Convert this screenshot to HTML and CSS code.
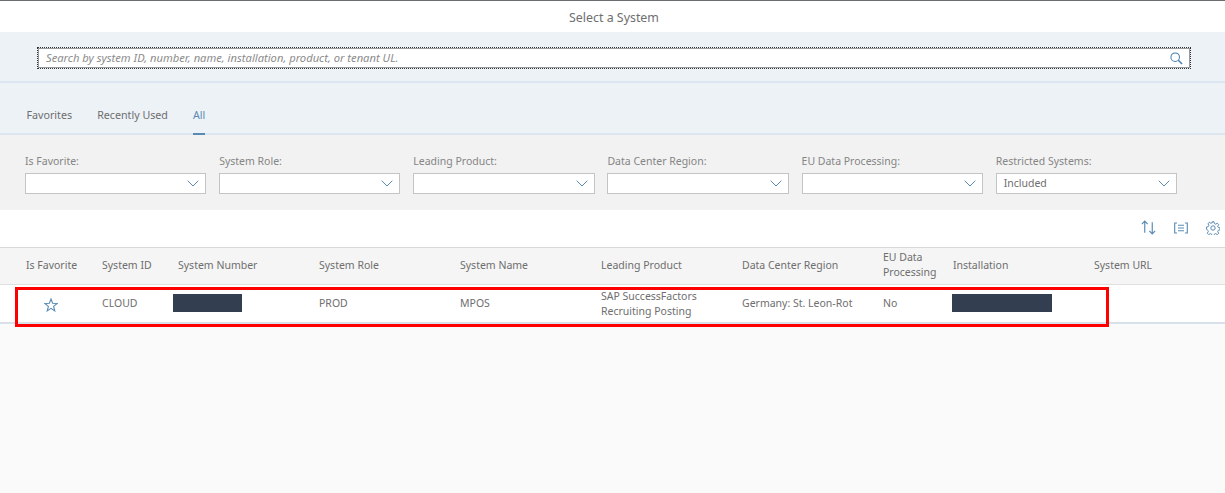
FILE: index.html
```html
<!DOCTYPE html>
<html lang="en">
<head>
<meta charset="utf-8">
<title>Select a System</title>
<link rel="stylesheet" href="styles.css">
</head>
<body>
<div class="page">
  <header class="title">Select a System</header>
  <section class="search-band">
    <div class="search">
      <span class="placeholder">Search by system ID, number, name, installation, product, or tenant UL.</span>
      <svg class="search-icon" viewBox="0 0 14 14" width="13" height="13"><circle cx="5.6" cy="5.6" r="4.6" fill="none" stroke="#427cac" stroke-width="1.1"/><path d="M9 9l4 4" stroke="#427cac" stroke-width="1.5" fill="none"/></svg>
    </div>
  </section>
  <nav class="tabs">
    <span class="tab">Favorites</span>
    <span class="tab">Recently Used</span>
    <span class="tab active">All</span>
  </nav>
  <section class="filters">
    <div class="filter"><label>Is Favorite:</label><div class="select"><span></span><svg viewBox="0 0 12 7" width="12" height="7"><path d="M.7.7L6 6l5.3-5.3" fill="none" stroke="#5a8ab3"/></svg></div></div>
    <div class="filter"><label>System Role:</label><div class="select"><span></span><svg viewBox="0 0 12 7" width="12" height="7"><path d="M.7.7L6 6l5.3-5.3" fill="none" stroke="#5a8ab3"/></svg></div></div>
    <div class="filter"><label>Leading Product:</label><div class="select"><span></span><svg viewBox="0 0 12 7" width="12" height="7"><path d="M.7.7L6 6l5.3-5.3" fill="none" stroke="#5a8ab3"/></svg></div></div>
    <div class="filter"><label>Data Center Region:</label><div class="select"><span></span><svg viewBox="0 0 12 7" width="12" height="7"><path d="M.7.7L6 6l5.3-5.3" fill="none" stroke="#5a8ab3"/></svg></div></div>
    <div class="filter"><label>EU Data Processing:</label><div class="select"><span></span><svg viewBox="0 0 12 7" width="12" height="7"><path d="M.7.7L6 6l5.3-5.3" fill="none" stroke="#5a8ab3"/></svg></div></div>
    <div class="filter"><label>Restricted Systems:</label><div class="select"><span>Included</span><svg viewBox="0 0 12 7" width="12" height="7"><path d="M.7.7L6 6l5.3-5.3" fill="none" stroke="#5a8ab3"/></svg></div></div>
  </section>
  <section class="toolbar">
    <svg viewBox="0 0 14 14" width="15" height="15"><path d="M3.5 12V1M.8 3.8L3.5 1l2.7 2.8M10.5 2v11M7.8 10.2l2.7 2.8 2.7-2.8" fill="none" stroke="#5a8ab3" stroke-width="1.1"/></svg>
    <svg viewBox="0 0 14 12" width="14" height="12"><path d="M3 1H.7v10H3M11 1h2.3v10H11M4 3.3h6M4 6h6M4 8.7h6" fill="none" stroke="#5a8ab3" stroke-width="1.1"/></svg>
    <svg viewBox="0 0 14 14" width="14" height="14"><path d="M6 .8h2l.4 1.8 1.3.6 1.6-1 1.4 1.4-1 1.6.6 1.3 1.8.4v2l-1.8.4-.6 1.3 1 1.6-1.4 1.4-1.6-1-1.3.6-.4 1.8H6l-.4-1.8-1.3-.6-1.6 1-1.4-1.4 1-1.6-.6-1.3L.5 8V6l1.8-.4.6-1.3-1-1.6 1.4-1.4 1.6 1 1.3-.6z" fill="none" stroke="#5a8ab3" stroke-width="1"/><circle cx="7" cy="7" r="2.2" fill="none" stroke="#5a8ab3"/></svg>
  </section>
  <section class="table">
    <div class="row head">
      <div>Is Favorite</div><div>System ID</div><div>System Number</div><div>System Role</div><div>System Name</div><div>Leading Product</div><div>Data Center Region</div><div>EU Data Processing</div><div>Installation</div><div>System URL</div>
    </div>
    <div class="row body-row">
      <div class="star"><svg viewBox="0 0 14 14" width="14" height="14"><path d="M7 1l1.6 4.3 4.6.2-3.6 2.9 1.2 4.5L7 10.4l-3.8 2.5 1.2-4.5L.8 5.5l4.6-.2z" fill="none" stroke="#5a8ab3" stroke-width="1.1"/></svg></div>
      <div>CLOUD</div>
      <div><span class="redact number"></span></div>
      <div>PROD</div>
      <div>MPOS</div>
      <div>SAP SuccessFactors Recruiting Posting</div>
      <div>Germany: St. Leon-Rot</div>
      <div>No</div>
      <div><span class="redact install"></span></div>
      <div></div>
    </div>
  </section>
  <div class="empty"></div>
  <div class="highlight"></div>
</div>
</body>
</html>
```

FILE: styles.css
```css
* { box-sizing: border-box; }
html, body { margin: 0; padding: 0; }
body { background: #fafafa; overflow: hidden; }
.page {
  position: relative;
  width: 1225px;
  height: 493px;
  overflow: hidden;
  display: flex;
  flex-direction: column;
  font-family: "Noto Sans", "Liberation Sans", sans-serif;
  font-size: 10.5px;
  color: #6e6e6e;
}
.title {
  height: 32px;
  flex: none;
  padding-left: 3px;
  background: #fff;
  border-top: 1px solid #6a6d70;
  text-align: center;
  font-size: 12.4px;
  line-height: 33px;
  color: #6e6e6e;
}
.search-band {
  height: 51px;
  flex: none;
  padding: 16px 35px 0 38px;
  background: #edf2f7;
  border-bottom: 2px solid #dbe6f0;
}
.search {
  height: 20px;
  display: flex;
  align-items: center;
  justify-content: space-between;
  padding: 0 6px 0 7px;
  background: #fff;
  outline: 1px dotted #333;
  border: 1px solid #999;
}
.placeholder { margin-bottom: 2px; font-style: italic; font-size: 11.2px; color: #8c8c8c; }
.search-icon { flex: none; }
.tabs {
  height: 52px;
  flex: none;
  display: flex;
  gap: 25px;
  padding-left: 26.5px;
  font-size: 10.7px;
  background: #edf2f7;
  border-bottom: 2px solid #dbe6f0;
}
.tab {
  position: relative;
  padding-top: 25px;
  line-height: 15px;
}
.tab.active { color: #5a8ab3; }
.tab.active::after {
  content: "";
  position: absolute;
  left: 0;
  right: 0;
  bottom: -2px;
  height: 2px;
  background: #5a8ab3;
}
.filters {
  height: 75px;
  flex: none;
  display: grid;
  grid-template-columns: repeat(6, 181.3px);
  column-gap: 12.85px;
  padding: 19px 0 0 25px;
  background: #f2f2f2;
}
.filter label {
  display: block;
  height: 19px;
  line-height: 14px;
  color: #858585;
}
.select {
  height: 21px;
  display: flex;
  align-items: center;
  justify-content: space-between;
  padding: 0 6px 1px 7px;
  background: #fff;
  border: 1px solid #c4c4c4;
}
.toolbar {
  height: 37px;
  flex: none;
  display: flex;
  justify-content: flex-end;
  align-items: center;
  gap: 18px;
  padding: 0 5px 2px 0;
  background: #fff;
}
.table { flex: none; }
.row {
  display: grid;
  grid-template-columns: 102px 76px 141px 141px 141px 141px 141px 70px 141px 131px;
  align-items: center;
}
.row > div:first-child { padding-left: 26px; }
.head {
  height: 38px;
  padding-bottom: 2px;
  background: #f5f5f5;
  border-top: 1px solid #d9d9d9;
  border-bottom: 1px solid #e0e0e0;
  line-height: 15px;
}
.head > div:nth-child(8) { padding-right: 4px; }
.body-row {
  height: 38px;
  background: #fff;
  border-bottom: 1px solid #dcdfe3;
  line-height: 15px;
}
.body-row > div:nth-child(6) { padding-right: 10px; }
.row > div.star { padding: 2px 0 0 44px; display: flex; }
.redact { display: block; height: 18px; background: #333f50; margin-top: -1px; }
.redact.number { width: 69px; margin-left: -5px; }
.redact.install { width: 100px; margin-left: -1px; }
.empty {
  flex: 1;
  background: #fafafa;
  border-top: 1px solid #d5e3f0;
}
.highlight {
  position: absolute;
  left: 15px;
  top: 287px;
  width: 1094px;
  height: 40px;
  border: 3px solid #f00;
  pointer-events: none;
}
```
